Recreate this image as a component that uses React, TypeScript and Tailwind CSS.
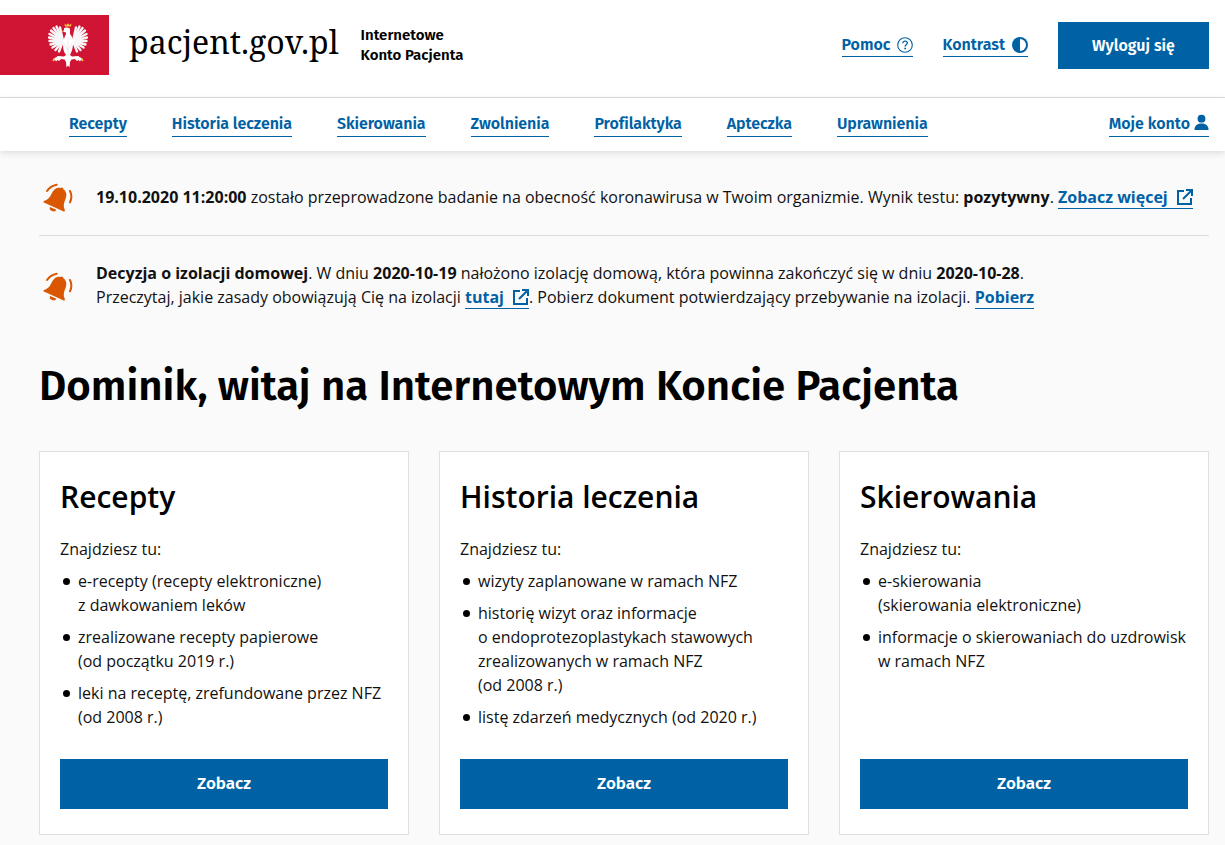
import { ReactNode } from "react";

const fira = "font-['Fira_Sans','Noto_Sans',sans-serif]";

function ExternalIcon({ className }: { className: string }) {
  return (
    <svg viewBox="0 0 16 16" fill="none" stroke="currentColor" strokeWidth="2" className={className}>
      <path d="M7 2H1v13h13V9" />
      <path d="M6 10l8.500-8.500M9 1h6v6" />
    </svg>
  );
}

function Bell() {
  return (
    <svg viewBox="0 0 30 30" className="ml-1 h-[30px] w-[30px] shrink-0 text-[#d95700]" fill="currentColor">
      <g transform="translate(10.8 24) rotate(24)">
        <path d="M-11.500 0L-11.500 -1.500C-8.500 -4 -7.500 -7 -7.500 -11C-7.500 -16.500 -5 -19.500 -1.500 -20.200A1.700 1.700 0 0 1 1.500 -20.200C5 -19.500 7.500 -16.500 7.500 -11C7.500 -7 8.500 -4 11.500 -1.500L11.500 0Z" />
        <path d="M-3.500 1.500H3.500A3.500 3 0 0 1 -3.500 1.500Z" />
      </g>
      <path d="M4 8C6 5 9.500 2.500 13.700 1.700" fill="none" stroke="currentColor" strokeWidth="2" strokeLinecap="round" />
      <path d="M27 8C28.800 11.500 28.800 15.500 27 19.300" fill="none" stroke="currentColor" strokeWidth="2" strokeLinecap="round" />
    </svg>
  );
}

// tips of the wing feathers, left wing, mirrored for the right one
const feathers = [
  [12, 4.5], [8.5, 3.5], [5.5, 5], [3, 7.5], [1.5, 11], [1, 14.5], [1.5, 18], [2.500, 21.500], [4.500, 24.500], [7.500, 27], [11, 28.500],
];

function Eagle() {
  return (
    <svg viewBox="0 0 40 45" className="h-[45px] w-[40px]" fill="none">
      <g stroke="#f7f7f7" strokeWidth="2.400" strokeLinecap="round">
        {feathers.map(([x, y]) => (
          <g key={x}>
            <path d={`M15 18L${x} ${y}`} />
            <path d={`M25 18L${40 - x} ${y}`} />
          </g>
        ))}
      </g>
      <path d="M17 3.500L16.500 .5L18.500 2L20 .2L21.500 2L23.500 .5L23 3.500Z" fill="#f0c040" />
      <path d="M16 7L13.500 8.500L16.500 9Z" fill="#f0c040" />
      <path d="M16 5.500C17 4 21 4 22 6V11C24 13 25.500 17 25 22C24.500 27 23 30 22 32L24 33.500L30 33L34 35.500L35 38L33 37L32 38.500L30.500 37L29 38L27 36L23.500 36.500L22 39L21.500 44.500L20 42.500L18.500 44.500L18 39L16.500 36.500L13 36L11 38L9.500 37L8 38.500L7 37L5 38L6 35.500L10 33L16 33.500L18 32C16.500 30 15 27 15 22C15 17 17 13 18 11V9.500L16 9Z" fill="#fff" />
      <path d="M5 38L6.500 35.500M35 38L33.500 35.500" stroke="#f0c040" strokeWidth="1.500" />
      <path d="M16 20L20 27M24 20L20 27M20 14V32" stroke="#d9d9d9" strokeWidth=".5" />
    </svg>
  );
}

function Link({ children, className = "", body = false }: { children: ReactNode; className?: string; body?: boolean }) {
  return (
    <a className={`inline-flex items-center border-b border-[#0061a5] text-[#0061a5] ${body ? "" : fira} ${className}`}>
      {children}
    </a>
  );
}

const navLinks = ["Recepty", "Historia leczenia", "Skierowania", "Zwolnienia", "Profilaktyka", "Apteczka", "Uprawnienia"];

const cards: { title: string; items: string[][] }[] = [
  {
    title: "Recepty",
    items: [
      ["e-recepty (recepty elektroniczne)", "z dawkowaniem leków"],
      ["zrealizowane recepty papierowe", "(od początku 2019 r.)"],
      ["leki na receptę, zrefundowane przez NFZ", "(od 2008 r.)"],
    ],
  },
  {
    title: "Historia leczenia",
    items: [
      ["wizyty zaplanowane w ramach NFZ"],
      ["historię wizyt oraz informacje", "o endoprotezoplastykach stawowych", "zrealizowanych w ramach NFZ", "(od 2008 r.)"],
      ["listę zdarzeń medycznych (od 2020 r.)"],
    ],
  },
  {
    title: "Skierowania",
    items: [
      ["e-skierowania", "(skierowania elektroniczne)"],
      ["informacje o skierowaniach do uzdrowisk", "w ramach NFZ"],
    ],
  },
];

function Card({ title, items }: { title: string; items: string[][] }) {
  return (
    <section className="flex h-[384px] flex-col border border-[#dfdfdf] bg-white px-5 pt-[25px]">
      <h2 className="text-[30px] leading-[40px] font-semibold text-black">{title}</h2>
      <p className="mt-5 leading-6">Znajdziesz tu:</p>
      <ul className="mt-[8px] flex flex-col gap-2">
        {items.map((lines) => (
          <li key={lines[0]} className="relative pl-[18px] leading-6">
            <span className="absolute top-[9px] left-[3px] h-[7px] w-[7px] rounded-full bg-black" />
            {lines.map((l) => (
              <div key={l}>{l}</div>
            ))}
          </li>
        ))}
      </ul>
      <button className={`mt-auto mb-[25px] h-[50px] bg-[#0061a5] text-[17px] font-semibold text-white ${fira}`}>Zobacz</button>
    </section>
  );
}

export default function App() {
  return (
    <div className="h-[845px] overflow-hidden bg-[#fafafa] font-['Open_Sans',sans-serif] text-base text-[#111]">
      <header className="flex h-[98px] items-center border-b border-[#dcdcdc] bg-white pr-4">
        <div className="mb-[7px] flex h-[60px] w-[109px] items-center justify-center bg-[#d01433] pl-[27px]">
          <Eagle />
        </div>
        <span className="mb-[14px] ml-5 font-['Noto_Serif','Liberation_Serif',serif] text-[32px] leading-none text-black">pacjent.gov.pl</span>
        <div className={`mb-[7px] ml-[22px] text-[15px] leading-5 font-semibold text-black ${fira}`}>
          <div>Internetowe</div>
          <div>Konto Pacjenta</div>
        </div>
        <div className="mb-[6px] ml-auto flex items-center">
          <Link className="pb-px leading-5 font-semibold">
            Pomoc
            <svg viewBox="0 0 16 16" fill="none" className="ml-[6px] h-4 w-4">
              <circle cx="8" cy="8" r="7.300" stroke="currentColor" strokeWidth="1.100" />
              <path d="M5.800 6.300c0-1.300 1-2.100 2.300-2.100s2.200.8 2.200 1.900c0 1.700-2.200 1.600-2.200 3.400" stroke="currentColor" strokeWidth="1.300" />
              <circle cx="8.100" cy="11.500" r=".9" fill="currentColor" />
            </svg>
          </Link>
          <Link className="ml-[30px] pb-px leading-5 font-semibold">
            Kontrast
            <svg viewBox="0 0 16 16" className="ml-[7px] h-4 w-4">
              <circle cx="8" cy="8" r="8" fill="currentColor" />
              <path d="M8 2a6 6 0 0 1 0 12z" fill="#fff" />
            </svg>
          </Link>
          <button className={`ml-[30px] h-[47px] w-[151px] bg-[#0061a5] font-semibold text-white ${fira}`}>Wyloguj się</button>
        </div>
      </header>

      <nav className="flex h-[53px] items-center bg-white pr-4 pl-[69px] shadow-[0_2px_6px_rgba(0,0,0,0.12)]">
        <div className="flex gap-[45px] tracking-[-0.06px]">
          {navLinks.map((n) => (
            <Link key={n} className="pt-px pb-[2px] leading-5 font-semibold">
              {n}
            </Link>
          ))}
        </div>
        <Link className="ml-auto pt-px pb-[2px] leading-5 font-semibold">
          Moje konto
          <svg viewBox="0 0 16 17" fill="currentColor" className="mb-[2px] ml-[4px] h-[17px] w-[15px]">
            <circle cx="8" cy="4.400" r="4.200" />
            <path d="M.5 16.500c0-4.500 2.500-7 7.500-7s7.500 2.500 7.500 7z" />
          </svg>
        </Link>
      </nav>

      <main className="pr-4 pl-[39px]">
        <div className="flex h-[85px] items-start border-b border-[#dcdcdc] pt-[32px]">
          <Bell />
          <p className="mt-[2px] ml-[23px] leading-6">
            <b>19.10.2020 11:20:00</b> zostało przeprowadzone badanie na obecność koronawirusa w Twoim organizmie. Wynik testu: <b>pozytywny</b>.{" "}
            <Link body className="leading-[22px] font-bold">
              Zobacz więcej
              <ExternalIcon className="ml-[9px] h-4 w-4" />
            </Link>
          </p>
        </div>
        <div className="flex items-start pt-[36px]">
          <Bell />
          <p className="-mt-[11px] ml-[23px] leading-6">
            <b>Decyzja o izolacji domowej</b>. W dniu <b>2020-10-19</b> nałożono izolację domową, która powinna zakończyć się w dniu <b>2020-10-28</b>.
            <br />
            Przeczytaj, jakie zasady obowiązują Cię na izolacji{" "}
            <Link body className="leading-[22px] font-bold">
              tutaj
              <ExternalIcon className="ml-[9px] h-4 w-4" />
            </Link>
            . Pobierz dokument potwierdzający przebywanie na izolacji.{" "}
            <Link body className="leading-[22px] font-bold">
              Pobierz
            </Link>
          </p>
        </div>
        <h1 className={`mt-[49px] text-[42px] leading-[56px] font-semibold text-black ${fira}`}>Dominik, witaj na Internetowym Koncie Pacjenta</h1>
        <div className="mt-[37px] grid grid-cols-3 gap-[30px]">
          {cards.map((c) => (
            <Card key={c.title} {...c} />
          ))}
        </div>
      </main>
    </div>
  );
}
